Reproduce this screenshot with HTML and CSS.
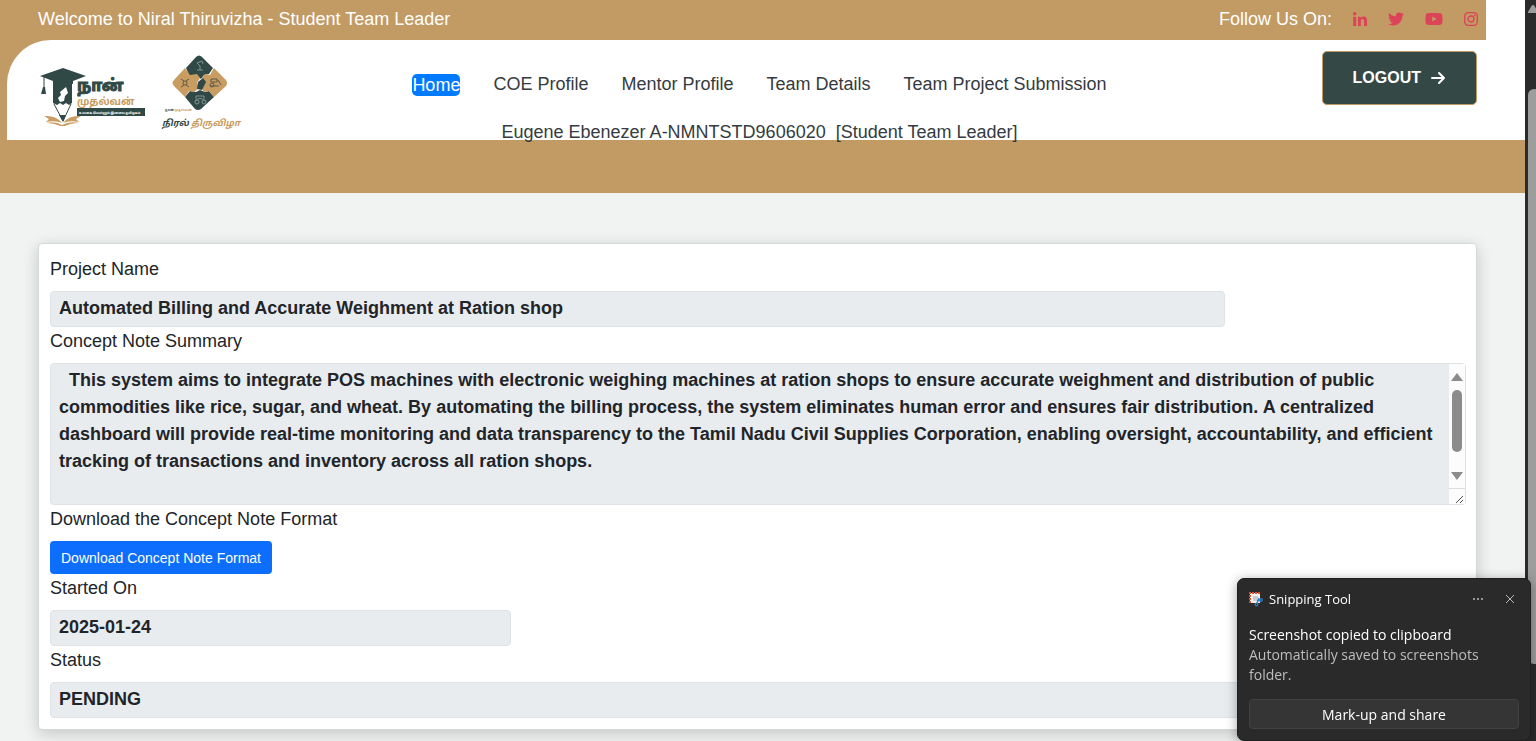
FILE: index.html
```html
<!DOCTYPE html>
<html lang="en">
<head>
<meta charset="utf-8">
<title>Niral Thiruvizha - Student Team Leader</title>
<link rel="stylesheet" href="styles.css">
</head>
<body>
<div class="page">
  <header class="header">
    <div class="topbar">
      <div class="topbar-main">
        <span>Welcome to Niral Thiruvizha - Student Team Leader</span>
        <div class="social">
          <span class="social-label">Follow Us On:</span>
          <a href="#" aria-label="LinkedIn"><svg width="14" height="14" viewBox="0 0 448 448"><path d="M100.3 448H7.4V148.900h92.900zM53.800 108.100C24.100 108.100 0 83.500 0 53.800a53.800 53.800 0 0 1 107.600 0c0 29.700-24.100 54.300-53.800 54.300zM447.900 448h-92.700V302.400c0-34.700-.7-79.200-48.300-79.200-48.300 0-55.700 37.700-55.700 76.700V448h-92.800V148.900h89.100v40.800h1.300c12.400-23.500 42.700-48.300 87.900-48.300 94 0 111.300 61.900 111.300 142.300V448z"/></svg></a>
          <a href="#" aria-label="Twitter"><svg width="16" height="16" viewBox="0 0 512 512"><path d="M459.400 151.700c.3 4.500.3 9.100.3 13.600 0 138.700-105.600 298.600-298.600 298.600-59.500 0-114.700-17.200-161.100-47.100 8.400 1 16.600 1.300 25.300 1.300 49.100 0 94.200-16.600 130.300-44.800-46.100-1-84.800-31.200-98.100-72.800 6.500 1 13 1.600 19.800 1.600 9.400 0 18.800-1.300 27.600-3.600-48.100-9.700-84.100-52-84.100-103v-1.300c14 7.800 30.200 12.700 47.400 13.300-28.300-18.800-46.800-51-46.800-87.400 0-19.500 5.200-37.400 14.300-53 51.700 63.700 129.300 105.300 216.400 109.800-1.600-7.800-2.600-15.900-2.600-24 0-57.800 46.800-104.900 104.900-104.900 30.200 0 57.500 12.700 76.700 33.100 23.700-4.500 46.500-13.300 66.600-25.300-7.800 24.400-24.400 44.800-46.100 57.800 21.100-2.300 41.600-8.100 60.400-16.200-14.300 20.800-32.200 39.300-52.600 54.300z"/></svg></a>
          <a href="#" aria-label="YouTube"><svg width="18" height="16" viewBox="0 0 576 512"><path d="M549.700 124.100c-6.300-23.700-24.800-42.300-48.300-48.600C458.800 64 288 64 288 64S117.200 64 74.600 75.500c-23.500 6.300-42 24.900-48.300 48.600C15 167 15 256.400 15 256.400s0 89.400 11.400 132.300c6.300 23.700 24.800 41.500 48.300 47.800C117.200 448 288 448 288 448s170.800 0 213.400-11.500c23.500-6.300 42-24.200 48.300-47.800C561 345.800 561 256.400 561 256.400s0-89.400-11.300-132.300zM232 338V175l143 81z"/></svg></a>
          <a href="#" aria-label="Instagram"><svg width="14" height="14" viewBox="0 0 14 14"><g fill="none" stroke="currentColor" stroke-width="1.300"><rect x=".7" y=".7" width="12.600" height="12.600" rx="3.600"/><circle cx="7" cy="7" r="3"/></g><circle cx="10.700" cy="3.300" r=".9"/></svg></a>
        </div>
      </div>
      <div class="topbar-end"></div>
    </div>
    <div class="navbar">
      <div class="brand">
        <svg class="logo-naan" width="108" height="62" viewBox="0 0 108 62" role="img" aria-label="Naan Mudhalvan">
          <path class="green" d="M15 15h19v21l-3 2-3-2-3 2-3-2-3 2-4-2z"/>
          <path class="green" d="M2 9 25 1l23 8-13 5v3q-10-3-20 0v-3z"/>
          <path class="line" d="M6 10v13M16 37l9 17 8-17"/>
          <path class="green" d="m5 20-2 7h5l-1-7zM21 48h7l-3 7z"/>
          <path class="white" d="m28 20-6 5 1 3-3 3 2 4 4-1 1-5 3-3z"/>
          <path class="tan" d="M6 49q12-1 18 7-7-3-16-1l3-3zM43 49q-12-1-18 7 7-3 16-1l-3-3zM8 56q10-2 16 2 7-4 17-2-8 0-14 3h-5q-6-3-14-3z"/>
          <text class="tamil heavy green" x="39" y="24" font-size="16">நான்</text>
          <text class="tamil tan" x="39" y="38" font-size="10">முதல்வன்</text>
          <path class="green" d="M39 41h68v8H39z"/>
          <text class="tamil white" x="41" y="47" font-size="3">உலகை வெல்லும் இளைய தமிழகம்</text>
        </svg>
        <svg width="82" height="78" viewBox="0 0 82 78" role="img" aria-label="Niral Thiruvizha">
          <path class="green" d="M35 2q3-3 6 0l11 11-4 6-5 1-3 4-4-3-7 1-4-9zM24 42l5-6 6 1 4-2 5 2 4-1 5 6-13 12q-3 2-6 0z"/>
          <path class="tan" d="m24 13 5 7 7-1 3 4-3 5 2 5-5 4-5-1-4 6-11-11q-3-3 0-6zM53 13l12 12q2 3 0 6L53 42l-5-6-5 1-3-5 4-5-3-4 3-4 5 1z"/>
          <path class="green" d="m42 23 3 4-4 8-5-1 1-7z"/>
          <g class="motif"><path d="M36 15h6M39 15v-4l-3-3 5-2 1 3M34 46q5-5 10 0M35 44v-3h8v3"/><circle cx="36" cy="47" r="2"/><circle cx="43" cy="47" r="2"/></g>
          <g class="motif-dark"><path d="m20 24 3 2m5-2-3 2m-5 6 3-2m5 2-3-2M49 31h9M50 24h6v3h-6zM57 25l3 5"/><circle cx="24" cy="28" r="2"/><circle cx="51" cy="30" r="2"/></g>
          <text class="tamil green" x="4" y="56" font-size="3">நான் <tspan class="tan">முதல்வன்</tspan></text>
          <text class="tamil script green" x="1" y="71" font-size="9">நிரல்</text>
          <text class="tamil script tan" x="30" y="71" font-size="9">திருவிழா</text>
        </svg>
      </div>
      <div class="center">
        <nav class="nav">
          <a class="active" href="#">Home</a>
          <a href="#">COE Profile</a>
          <a href="#">Mentor Profile</a>
          <a href="#">Team Details</a>
          <a href="#">Team Project Submission</a>
        </nav>
        <div class="user">Eugene Ebenezer A-NMNTSTD9606020 &nbsp;[Student Team Leader]</div>
      </div>
      <button class="logout" type="button">LOGOUT
        <svg width="15" height="14" viewBox="0 0 15 14"><path d="M1 7h12M8 2l5 5-5 5"/></svg>
      </button>
    </div>
  </header>
  <main class="card">
    <label for="project">Project Name</label>
    <input class="field field-wide" id="project" type="text" readonly value="Automated Billing and Accurate Weighment at Ration shop">
    <label for="summary">Concept Note Summary</label>
    <div class="summary">
      <textarea class="field" id="summary" readonly>  This system aims to integrate POS machines with electronic weighing machines at ration shops to ensure accurate weighment and distribution of public commodities like rice, sugar, and wheat. By automating the billing process, the system eliminates human error and ensures fair distribution. A centralized dashboard will provide real-time monitoring and data transparency to the Tamil Nadu Civil Supplies Corporation, enabling oversight, accountability, and efficient tracking of transactions and inventory across all ration shops.</textarea>
      <div class="scroll" aria-hidden="true">
        <svg width="12" height="9" viewBox="0 0 12 9"><path d="M6 0 12 8H0z"/></svg>
        <div class="scroll-track"><div class="scroll-thumb"></div></div>
        <svg width="12" height="9" viewBox="0 0 12 9"><path d="M6 9 0 1h12z"/></svg>
        <div class="grip"><svg width="9" height="9" viewBox="0 0 9 9"><path d="M1 8 8 1M5 8l3-3"/></svg></div>
      </div>
    </div>
    <label for="download">Download the Concept Note Format</label>
    <button class="download" id="download" type="button">Download Concept Note Format</button>
    <label for="started">Started On</label>
    <input class="field field-narrow" id="started" type="text" readonly value="2025-01-24">
    <label for="status">Status</label>
    <input class="field" id="status" type="text" readonly value="PENDING">
  </main>
</div>
<div class="rail" aria-hidden="true">
  <svg width="10" height="8" viewBox="0 0 10 8"><path d="M5 0q1 0 1.500 1L10 7v1H0V7l3.500-6Q4 0 5 0z"/></svg>
  <div class="rail-thumb"></div>
</div>
<aside class="toast">
  <div class="toast-head">
    <svg width="14" height="15" viewBox="0 0 14 15"><path fill="#f4f1ef" d="M1 1h10v10H1z"/><path fill="none" stroke="#d8512f" stroke-width="2" stroke-dasharray="2 1" d="M1 11V1h10"/><path fill="#c9cbd0" d="M4 4h5v5H4z"/><g fill="none" stroke="#2b7cc4" stroke-width="1.300"><path d="m10 6-2 5M8 9l4-1"/><circle cx="7.500" cy="12.500" r="1.300"/><circle cx="12" cy="8" r="1.300"/></g></svg>
    <span class="toast-app">Snipping Tool</span>
    <button class="icon-btn" type="button" aria-label="More"><svg width="10" height="10" viewBox="0 0 10 10"><circle cx="1" cy="5" r="1"/><circle cx="5" cy="5" r="1"/><circle cx="9" cy="5" r="1"/></svg></button>
    <button class="icon-btn" type="button" aria-label="Close"><svg width="10" height="10" viewBox="0 0 10 10"><path d="m1 1 8 8M9 1 1 9"/></svg></button>
  </div>
  <div class="toast-title">Screenshot copied to clipboard</div>
  <div class="toast-text">Automatically saved to screenshots folder.</div>
  <button class="toast-action" type="button">Mark-up and share</button>
</aside>
</body>
</html>
```
FILE: styles.css
```css
* { box-sizing: border-box; }
body {
  margin: 0;
  display: flex;
  min-height: 100vh;
  background: #f1f3f2;
  color: #212529;
  font: 18px/27px "Liberation Sans", Arial, sans-serif;
}
svg { display: block; fill: currentColor; }
button, input, textarea { font-family: inherit; }
.page { flex: 1; min-width: 0; }

.header { background: #c29a63; padding-bottom: 53px; }
.topbar { display: flex; height: 40px; }
.topbar-main {
  flex: 1;
  display: flex;
  justify-content: space-between;
  align-items: center;
  padding: 0 8px 2px 38px;
  color: #fff;
}
.topbar-end { width: 39px; background: #fff; }
.social { display: flex; align-items: center; gap: 21px; }
.social a { color: #dc4359; }

.navbar {
  display: grid;
  grid-template-columns: 1fr auto 1fr;
  align-items: start;
  height: 100px;
  margin-left: 7px;
  padding: 0 48px 0 31px;
  background: #fff;
  border-top-left-radius: 44px;
}
.brand { display: flex; gap: 15px; padding-top: 15px; }
.logo-naan { margin-top: 12px; }
.green { fill: #304946; }
.tan { fill: #c99c62; }
.white { fill: #fff; }
.line { fill: none; stroke: #304946; stroke-width: 1; }
.motif { fill: none; stroke: #7f9391; }
.motif-dark { fill: none; stroke: #5b5a45; }
.tamil { font-family: "Noto Sans Tamil", "Noto Sans", sans-serif; font-weight: 700; }
.heavy { stroke: #304946; stroke-width: 1; }
.script { font-style: italic; }

.center { padding-left: 4px; text-align: center; color: #353b40; }
.nav { display: flex; gap: 33px; padding-top: 31px; justify-content: center; }
.nav a { color: inherit; text-decoration: none; }
.nav .active {
  align-self: center;
  line-height: 22px;
  color: #fff;
  background: #007bff;
  border-radius: 5px;
}
.user { margin-top: 21px; }
.logout {
  justify-self: end;
  display: flex;
  align-items: center;
  gap: 10px;
  height: 54px;
  margin-top: 11px;
  padding: 0 30px;
  border: 1px solid #c29a63;
  border-radius: 5px;
  background: #344845;
  color: #fff;
  font-size: 16px;
  font-weight: 700;
}
.logout svg { fill: none; stroke: #fff; stroke-width: 2; stroke-linecap: round; stroke-linejoin: round; }

.card {
  display: flex;
  flex-direction: column;
  align-items: flex-start;
  margin: 50px 48px 11px 38px;
  padding: 11px 10px 11px 11px;
  border: 1px solid #d5d7d8;
  border-radius: 4px;
  background: #fff;
  box-shadow: 0 4px 16px rgba(0, 0, 0, 0.18);
}
.card label { line-height: 29px; margin-bottom: 7px; }
.field {
  display: block;
  width: 100%;
  height: 36px;
  padding: 3px 8px 5px;
  border: 1px solid #dee2e6;
  border-radius: 4px;
  background: #e9ecef;
  color: #212529;
  font-size: 18px;
  line-height: 27px;
  font-weight: 700;
  outline: 0;
}
.field-wide { width: 83%; }
.field-narrow { width: calc(33% - 6px); }
.summary { position: relative; width: 100%; }
.summary .field { height: 142px; padding-right: 24px; resize: none; overflow: hidden; }
.scroll {
  position: absolute;
  top: 1px;
  right: 1px;
  bottom: 1px;
  width: 16px;
  display: flex;
  flex-direction: column;
  align-items: center;
  padding-top: 9px;
  background: #fcfcfc;
  color: #8b8b8b;
}
.scroll-track { flex: 1; padding-top: 8px; }
.scroll-thumb { width: 10px; height: 62px; border-radius: 5px; background: #8b8b8b; }
.grip {
  width: 16px;
  height: 16px;
  margin-top: 8px;
  padding: 6px 0 0 6px;
  border-top: 1px solid #dedede;
}
.grip svg { fill: none; stroke: #555; }
.download {
  height: 33px;
  padding: 0 11px;
  border: 0;
  border-radius: 4px;
  background: #0d6efd;
  color: #fff;
  font-size: 14px;
}

.rail { width: 11px; background: #2b2b2b; color: #9d9d9d; padding: 5px 0 0 3px; overflow: hidden; }
.rail-thumb { width: 12px; height: 575px; margin-top: 76px; border-radius: 6px; background: #9d9d9d; }

.toast {
  position: fixed;
  right: 5px;
  bottom: 0;
  width: 294px;
  padding: 8px 11px 11px;
  border: 1px solid #1f1f1f;
  border-radius: 7px;
  background: #2a2a2a;
  color: #fff;
  font: 14px/20px "Open Sans", "Noto Sans", sans-serif;
  box-shadow: 0 2px 12px rgba(0, 0, 0, 0.35);
}
.toast-head { display: flex; align-items: center; gap: 6px; height: 24px; margin-bottom: 14px; }
.toast-app { flex: 1; font-size: 13px; }
.icon-btn { width: 26px; padding: 0 8px; border: 0; background: none; color: #bbb; }
.icon-btn:last-child { margin-right: -4px; }
.icon-btn svg { stroke: currentColor; stroke-width: 1; }
.icon-btn circle { stroke: none; }
.toast-text { color: #bdbdbd; }
.toast-action {
  width: 100%;
  height: 30px;
  margin-top: 14px;
  border: 1px solid #414141;
  border-radius: 4px;
  background: #353535;
  color: #fff;
  font-size: 14px;
}
```
